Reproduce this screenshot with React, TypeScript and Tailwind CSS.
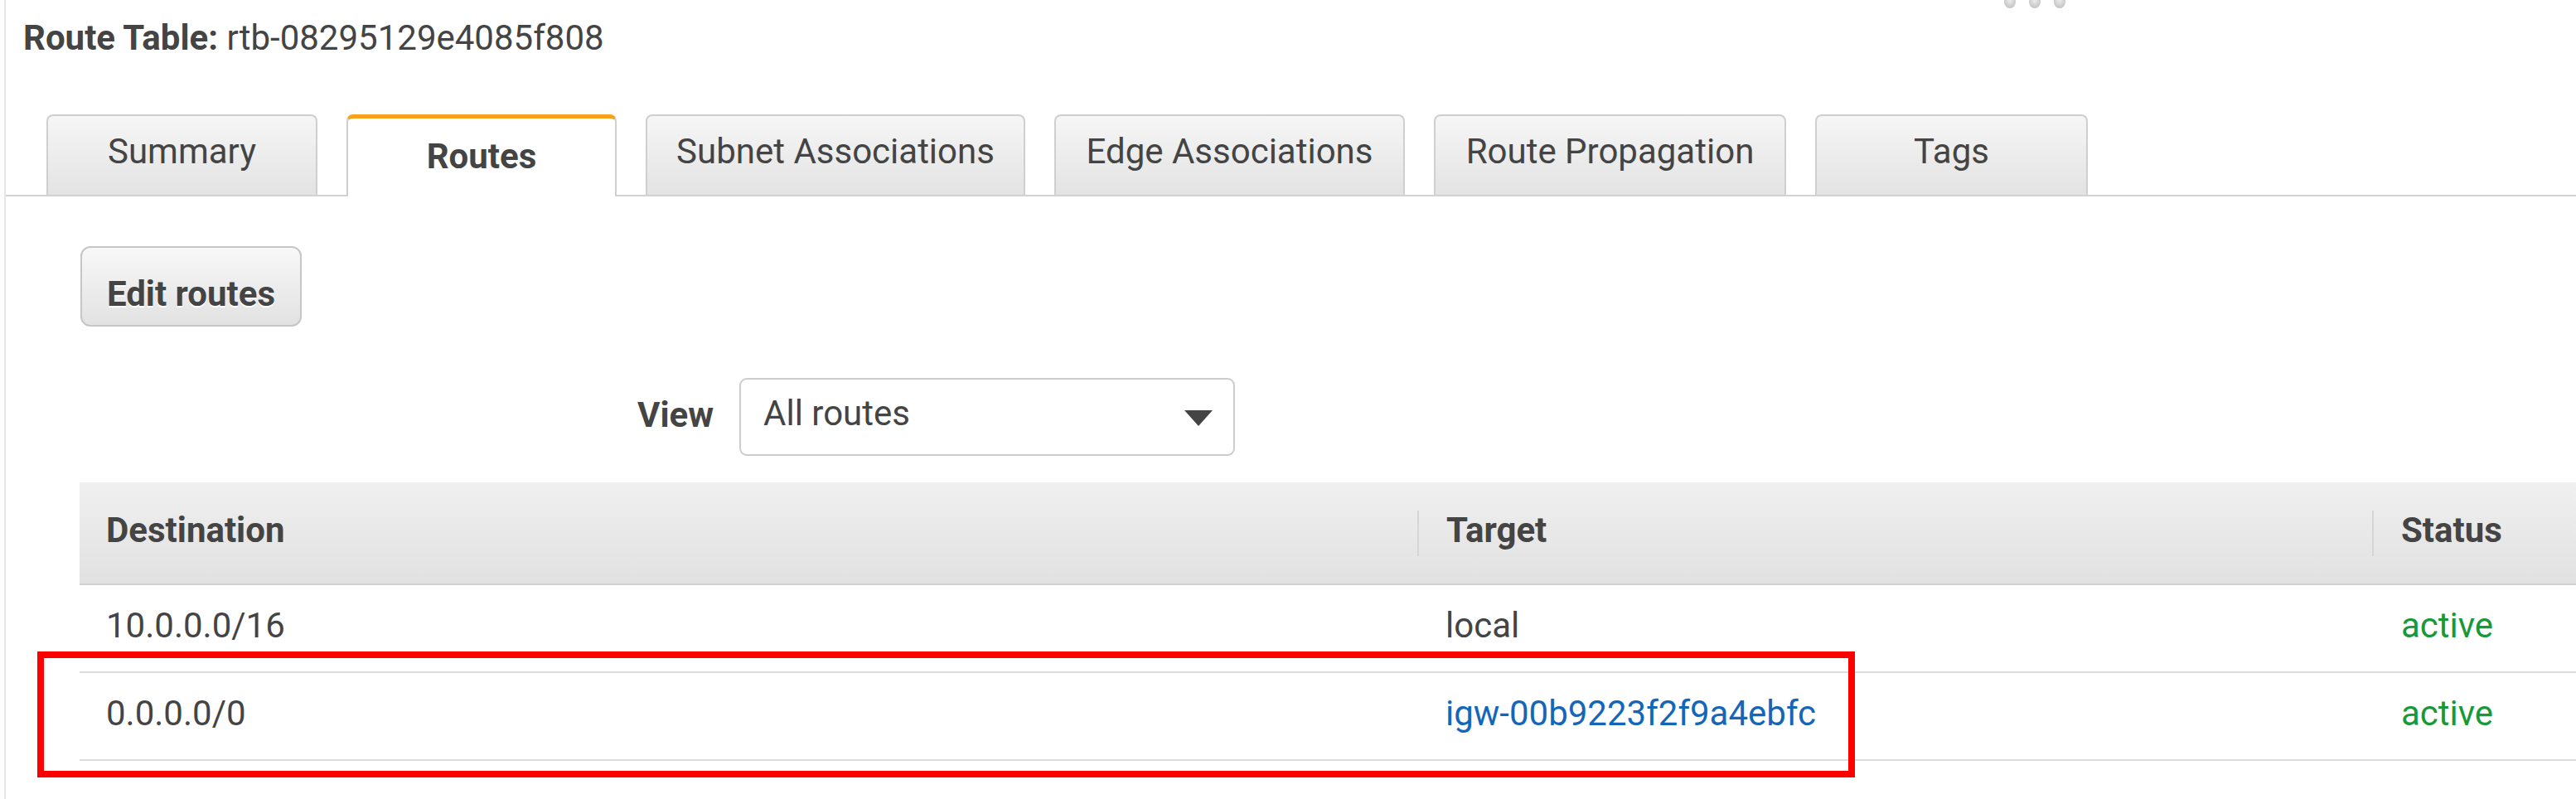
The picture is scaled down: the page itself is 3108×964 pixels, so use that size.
import React from 'react';

type Tab = { label: string; w: string; active?: boolean };

const tabs: Tab[] = [
  { label: 'Summary', w: 'w-[327px]' },
  { label: 'Routes', w: 'w-[326px]', active: true },
  { label: 'Subnet Associations', w: 'w-[458px]' },
  { label: 'Edge Associations', w: 'w-[423px]' },
  { label: 'Route Propagation', w: 'w-[425px]' },
  { label: 'Tags', w: 'w-[329px]' },
];

type Row = { dest: string; target: string; link?: boolean; status: string };

const rows: Row[] = [
  { dest: '10.0.0.0/16', target: 'local', status: 'active' },
  { dest: '0.0.0.0/0', target: 'igw-00b9223f2f9a4ebfc', link: true, status: 'active' },
];

function Dots() {
  return (
    <svg width="80" height="16" viewBox="0 0 80 16" className="absolute left-[2416px] top-0">
      <defs>
        <radialGradient id="dg" cx="50%" cy="40%" r="60%">
          <stop offset="0%" stopColor="#ececec" />
          <stop offset="100%" stopColor="#c4c4c4" />
        </radialGradient>
      </defs>
      <ellipse cx="9" cy="2" rx="7" ry="8" fill="url(#dg)" />
      <ellipse cx="39" cy="2" rx="7" ry="8" fill="url(#dg)" />
      <ellipse cx="69" cy="2" rx="7" ry="8" fill="url(#dg)" />
    </svg>
  );
}

function Separator() {
  return <div className="mt-[34px] h-[55px] w-[2px] shrink-0 bg-[#d6d6d6]" />;
}

export default function App() {
  return (
    <div className="relative h-[964px] w-[3108px] overflow-hidden bg-white pl-[5px] font-['Roboto','Liberation_Sans',sans-serif] text-[42px] leading-[48px] text-[#444]">
      <Dots />
      <div className="h-full border-l-2 border-[#e6e6e6]">
        {/* Title */}
        <div className="h-[70px] pl-[21px] pt-[22px] whitespace-nowrap">
          <span className="font-bold">Route Table:</span> rtb-08295129e4085f808
        </div>

        {/* Tabs */}
        <div className="mt-[68px] flex items-end gap-[35px] border-b-2 border-[#d2d2d2] pl-[49px]">
          {tabs.map((t) =>
            t.active ? (
              <div
                key={t.label}
                className={`-mb-[2px] h-[99px] ${t.w} rounded-t-[8px] border-x-2 border-t-[5px] border-x-[#cfcfcf] border-t-[#f7a21b] bg-white pt-[22px] text-center font-bold whitespace-nowrap`}
              >
                {t.label}
              </div>
            ) : (
              <div
                key={t.label}
                className={`h-[97px] ${t.w} rounded-t-[8px] border-x-2 border-t-2 border-[#cfcfcf] bg-gradient-to-b from-[#f6f6f6] to-[#e3e3e3] pt-[19px] text-center whitespace-nowrap`}
              >
                {t.label}
              </div>
            )
          )}
        </div>

        {/* Content */}
        <div className="pl-[89px] pt-[60px]">
          <button className="ml-[1px] block h-[97px] w-[267px] rounded-[12px] border-2 border-[#c6c6c6] bg-gradient-to-b from-[#f8f8f8] to-[#e2e2e2] pt-[19px] text-center font-bold text-[#444] [text-shadow:0_2px_0_#ffffff]">
            Edit routes
          </button>

          <div className="mt-[62px] flex items-start">
            <div className="ml-[673px] pt-[21px] font-bold">View</div>
            <div className="ml-[31px] flex h-[94px] w-[598px] items-start justify-between rounded-[9px] border-2 border-[#cccccc] bg-white pl-[27px] pr-[25px] pt-[17px]">
              <span>All routes</span>
              <svg width="34" height="19" viewBox="0 0 34 19" className="mt-[20px]">
                <polygon points="0,0 34,0 17,19" fill="#444" />
              </svg>
            </div>
          </div>

          {/* Table */}
          <div className="mt-[32px]">
            <div className="grid h-[124px] grid-cols-[1614px_1152px_1fr] border-b-2 border-[#d0d0d0] bg-gradient-to-b from-[#f0f0f0] to-[#e1e1e1] font-bold">
              <div className="pl-[32px] pt-[34px]">Destination</div>
              <div className="flex">
                <Separator />
                <div className="pl-[33px] pt-[34px]">Target</div>
              </div>
              <div className="flex">
                <Separator />
                <div className="pl-[33px] pt-[34px]">Status</div>
              </div>
            </div>
            {rows.map((r) => (
              <div
                key={r.dest}
                className="grid h-[106px] grid-cols-[1614px_1152px_1fr] border-b-2 border-[#dddddd]"
              >
                <div className="pl-[32px] pt-[25px]">{r.dest}</div>
                <div className="pl-[34px] pt-[25px]">
                  {r.link ? <span className="text-[#1467b8]">{r.target}</span> : r.target}
                </div>
                <div className="pl-[35px] pt-[25px] text-[#17993a]">{r.status}</div>
              </div>
            ))}
          </div>
        </div>
      </div>

      {/* Highlight annotation */}
      <div className="pointer-events-none absolute left-[45px] top-[786px] h-[152px] w-[2193px] border-[8px] border-[#ff0000]" />
    </div>
  );
}
